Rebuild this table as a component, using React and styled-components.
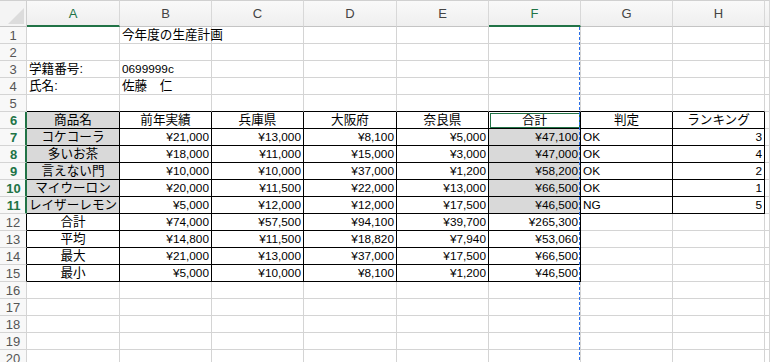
import React from "react"
import styled, {createGlobalStyle, css} from "styled-components"


const GlobalStyle = createGlobalStyle`
    html, body {
        margin: 0;
        padding: 0;
        background: #ffffff;
        overflow: hidden;
    }
`

const COLS = ["A", "B", "C", "D", "E", "F", "G", "H", ""]
const GREEN = "#217346"
const GRID = "#d4d4d4"

const Sheet = styled.div`
    position: relative;
    display: grid;
    grid-template-columns: 27px 93px 92px 92px 93px 92px 92px 92px 92px 1fr;
    grid-template-rows: 27px;
    grid-auto-rows: 17px;
    width: 770px;
    height: 362px;
    overflow: hidden;
    background: #fff;
    font-family: "Liberation Sans", "Noto Sans CJK JP", sans-serif;
    color: #000;
`

const Corner = styled.div`
    position: relative;
    box-sizing: border-box;
    background: #f4f4f4;
    border-top: 1px solid #d0d0d0;
    border-right: 1px solid #cfcfcf;
    border-bottom: 1px solid #c4c4c4;

    &::after {
        content: "";
        position: absolute;
        right: 2px;
        bottom: 2px;
        width: 0;
        height: 0;
        border-left: 16px solid transparent;
        border-bottom: 16px solid #dcdcdc;
    }
`

const ColHead = styled.div`
    box-sizing: border-box;
    display: flex;
    align-items: center;
    justify-content: center;
    background: linear-gradient(#f9f9f9, #efefef);
    border-top: 1px solid #d0d0d0;
    border-right: 1px solid #d8d8d8;
    border-bottom: ${p => p.active ? `2px solid ${GREEN}` : "1px solid #c4c4c4"};
    font-size: 13px;
    color: ${p => p.active ? GREEN : "#444"};
    padding-top: ${p => p.active ? "1px" : "0"};
`

const RowHead = styled.div`
    box-sizing: border-box;
    display: flex;
    align-items: center;
    justify-content: center;
    background: #f8f8f8;
    border-bottom: 1px solid ${GRID};
    border-right: ${p => p.active ? `2px solid ${GREEN}` : p.edge ? "1px solid #000" : `1px solid ${GRID}`};
    font-size: 13px;
    font-weight: ${p => p.active ? "bold" : "normal"};
    color: ${p => p.active ? GREEN : "#555"};
    padding-left: ${p => p.active ? "2px" : "0"};
`

const Cell = styled.div`
    box-sizing: border-box;
    display: flex;
    align-items: center;
    justify-content: ${p => p.align === "center" ? "center" : p.align === "right" ? "flex-end" : "flex-start"};
    padding: 0 2px;
    white-space: nowrap;
    overflow: visible;
    font-size: ${p => p.num ? "11.8px" : "12.6px"};
    line-height: 16px;
    background: ${p => p.fill ? "#d9d9d9" : "transparent"};
    border-right: 1px solid ${p => p.rb ? "#000" : GRID};
    border-bottom: 1px solid ${p => p.bb ? "#000" : GRID};
    ${p => p.selected && css`
        outline: 1px solid ${GREEN};
        outline-offset: -2px;
    `}
`

const PageBreak = styled.div`
    position: absolute;
    left: 579px;
    top: 27px;
    bottom: 0;
    width: 1px;
    background: repeating-linear-gradient(to bottom, #2b6fe6 0 3px, transparent 3px 5px);
`

const headers = ["商品名", "前年実績", "兵庫県", "大阪府", "奈良県", "合計", "判定", "ランキング"]

const products = [
    ["コケコーラ", "¥21,000", "¥13,000", "¥8,100", "¥5,000", "¥47,100", "OK", "3"],
    ["多いお茶", "¥18,000", "¥11,000", "¥15,000", "¥3,000", "¥47,000", "OK", "4"],
    ["言えない門", "¥10,000", "¥10,000", "¥37,000", "¥1,200", "¥58,200", "OK", "2"],
    ["マイウーロン", "¥20,000", "¥11,500", "¥22,000", "¥13,000", "¥66,500", "OK", "1"],
    ["レイザーレモン", "¥5,000", "¥12,000", "¥12,000", "¥17,500", "¥46,500", "NG", "5"],
]

const summary = [
    ["合計", "¥74,000", "¥57,500", "¥94,100", "¥39,700", "¥265,300"],
    ["平均", "¥14,800", "¥11,500", "¥18,820", "¥7,940", "¥53,060"],
    ["最大", "¥21,000", "¥13,000", "¥37,000", "¥17,500", "¥66,500"],
    ["最小", "¥5,000", "¥10,000", "¥8,100", "¥1,200", "¥46,500"],
]

// build a 20 row model: each cell {text, align, num, fill, rb, bb, selected}
const buildRows = () => {
    const rows = []
    for (let r = 1; r <= 20; r++) {
        rows.push(COLS.map(() => ({text: ""})))
    }
    const row = n => rows[n - 1]

    row(1)[1] = {text: "今年度の生産計画"}
    row(3)[0] = {text: "学籍番号:"}
    row(3)[1] = {text: "0699999c", num: true}
    row(4)[0] = {text: "氏名:"}
    row(4)[1] = {text: "佐藤　仁"}

    for (let c = 0; c < 8; c++) row(5)[c].bb = true

    headers.forEach((h, c) => {
        row(6)[c] = {text: h, align: "center", rb: true, bb: true, fill: c === 0, selected: c === 5}
    })

    products.forEach((p, i) => {
        p.forEach((v, c) => {
            row(7 + i)[c] = {
                text: v,
                align: c === 0 ? "center" : c === 6 ? "left" : "right",
                num: c > 0,
                fill: c === 0 || c === 5,
                rb: true,
                bb: true,
            }
        })
    })

    summary.forEach((s, i) => {
        s.forEach((v, c) => {
            row(12 + i)[c] = {text: v, align: c === 0 ? "center" : "right", num: c > 0, rb: true, bb: true}
        })
    })

    return rows
}

const App = () => {
    const rows = buildRows()

    return (
        <>
            <GlobalStyle/>
            <Sheet>
                <Corner/>
                {COLS.map((c, i) => (
                    <ColHead key={"h" + i} active={c === "A" || c === "F"}>{c}</ColHead>
                ))}
                {rows.map((cells, r) => (
                    <React.Fragment key={r}>
                        <RowHead active={r >= 5 && r <= 10} edge={r >= 11 && r <= 14}>{r + 1}</RowHead>
                        {cells.map((cell, c) => (
                            <Cell
                                key={c}
                                align={cell.align}
                                num={cell.num}
                                fill={cell.fill}
                                rb={cell.rb}
                                bb={cell.bb}
                                selected={cell.selected}
                            >
                                {cell.text}
                            </Cell>
                        ))}
                    </React.Fragment>
                ))}
                <PageBreak/>
            </Sheet>
        </>
    )
}


export default App
